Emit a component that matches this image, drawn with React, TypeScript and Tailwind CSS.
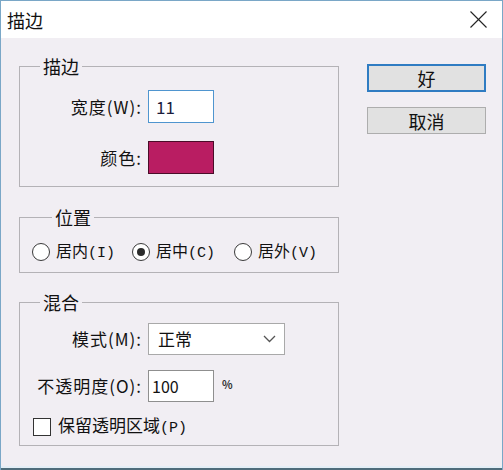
import React from "react";

const font = { fontFamily: '"Noto Sans CJK SC", "Noto Sans", sans-serif' };

function Group({ title, children, className }: { title: string; children: React.ReactNode; className?: string }) {
  return (
    <fieldset className={"w-[320px] border border-[#b4b2b6] " + (className ?? "")}>
      <legend className="ml-[20px] px-[3px] text-[18px] leading-[20px] text-[#111]">{title}</legend>
      {children}
    </fieldset>
  );
}

function Key({ k }: { k: string }) {
  return <span className="font-['Liberation_Mono',monospace] text-[15px] leading-[20px]">({k})</span>;
}

function Radio({ label, k, checked, className }: { label: string; k: string; checked?: boolean; className?: string }) {
  return (
    <div className={"flex h-[20px] items-center gap-[6px] " + (className ?? "")}>
      <span className="flex h-[18px] w-[18px] items-center justify-center rounded-full border border-[#3a3a3a] bg-white">
        {checked && <span className="h-[8px] w-[8px] rounded-full bg-[#2b2b2b]" />}
      </span>
      <span className="text-[16px] leading-[20px]">
        {label}
        <Key k={k} />
      </span>
    </div>
  );
}

export default function App() {
  return (
    <div
      className="flex h-[470px] w-[503px] flex-col overflow-hidden border-x border-t border-[#7aa7c7] bg-[#f1eef3] text-[#111]"
      style={font}
    >
      {/* TITLE BAR */}
      <div className="flex h-[37px] shrink-0 items-center justify-between bg-white pl-[6px] pr-[15px]">
        <span className="text-[18px] leading-none">描边</span>
        <svg width="17" height="17" viewBox="0 0 17 17" stroke="#222" strokeWidth="1.1">
          <line x1="0.5" y1="0.5" x2="16.5" y2="16.5" />
          <line x1="16.5" y1="0.5" x2="0.5" y2="16.5" />
        </svg>
      </div>

      {/* BODY */}
      <div className="flex flex-1 pl-[18px] pt-[18px]">
        <div className="flex flex-col">
          {/* STROKE */}
          <Group title="描边" className="pb-[12px] pt-[14px]">
            <div className="flex items-center">
              <span className="w-[122px] text-right text-[17px] tracking-[1px]">宽度(W):</span>
              <div className="ml-[6px] flex h-[33px] w-[66px] items-center border border-[#4f95cf] bg-white pl-[7px] text-[17px] text-[#1c1c3c]">
                11
              </div>
            </div>
            <div className="mt-[18px] flex items-center">
              <span className="w-[122px] text-right text-[17px] tracking-[1px]">颜色:</span>
              <div className="ml-[6px] h-[33px] w-[66px] border border-[#4a0c28] bg-[#b91d62]" />
            </div>
          </Group>

          {/* POSITION */}
          <Group title="位置" className="mt-[20px] pb-[10px] pl-[12px] pt-[15px]">
            <div className="flex">
              <Radio label="居内" k="I" className="w-[100px]" />
              <Radio label="居中" k="C" checked className="w-[102px]" />
              <Radio label="居外" k="V" />
            </div>
          </Group>

          {/* BLEND */}
          <Group title="混合" className="mt-[19px] pb-[8px] pt-[11px]">
            <div className="flex items-center">
              <span className="w-[122px] text-right text-[17px] tracking-[1px]">模式(M):</span>
              <div className="ml-[6px] flex h-[32px] w-[137px] items-center justify-between border border-[#a9a9a9] bg-white pl-[9px] pr-[8px] text-[17px]">
                <span>正常</span>
                <svg width="13" height="8" viewBox="0 0 13 8" fill="none" stroke="#555" strokeWidth="1.3">
                  <polyline points="1,1 6.5,6.5 12,1" />
                </svg>
              </div>
            </div>
            <div className="mt-[15px] flex items-center">
              <span className="w-[122px] text-right text-[17px] tracking-[1px]">不透明度(O):</span>
              <div className="ml-[6px] flex h-[32px] w-[66px] items-center border border-[#8f8f8f] bg-white pl-[3px] text-[16px]">
                100
              </div>
              <span className="mb-[4px] ml-[8px] text-[11px] font-bold text-[#333]">%</span>
            </div>
            <div className="mt-[15px] flex h-[20px] items-center pl-[13px]">
              <span className="h-[18px] w-[18px] border border-[#333] bg-white" />
              <span className="ml-[7px] text-[17px] leading-[20px]">
                保留透明区域
                <Key k="P" />
              </span>
            </div>
          </Group>
        </div>

        {/* BUTTONS */}
        <div className="ml-[28px] flex flex-col pt-[8px]">
          <button className="h-[28px] w-[119px] border-2 border-[#2f7cc2] bg-[#e1e1e1] text-[18px] leading-none">
            好
          </button>
          <button className="mt-[15px] h-[27px] w-[119px] border border-[#adadad] bg-[#e1e1e1] text-[18px] leading-none">
            取消
          </button>
        </div>
      </div>

      {/* BOTTOM EDGE */}
      <div className="h-[2px] shrink-0 bg-[#e4eef6]" />
      <div className="h-[2px] shrink-0 bg-[#4f6c7a]" />
    </div>
  );
}
